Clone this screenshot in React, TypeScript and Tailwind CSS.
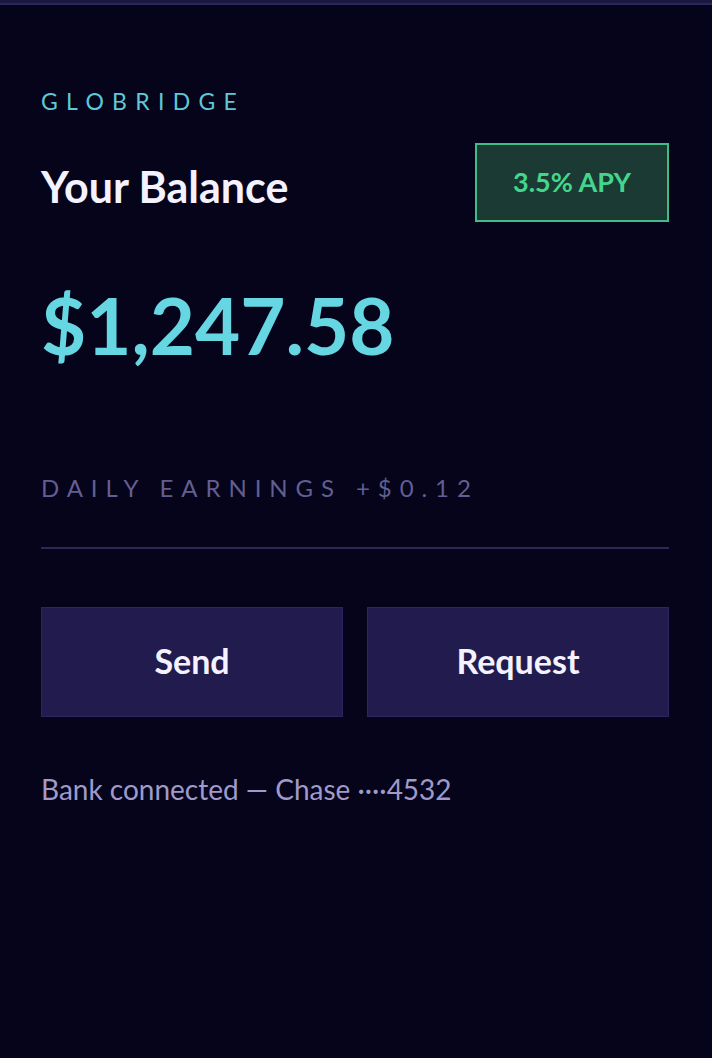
export default function App() {
  return (
    <div className="min-h-screen bg-[#05041a] font-['Lato','Noto_Sans',sans-serif]">
      {/* top edge */}
      <div className="h-[3px] bg-[#1c1940]" />
      <div className="h-[2px] bg-[#2b2660]" />

      <main className="pl-[41px] pr-[43px] pt-[80px]">
        <div className="text-[23px] leading-[32px] tracking-[0.36em] text-[#5ec8d6]">
          GLOBRIDGE
        </div>

        <div className="mt-[26px] flex items-center justify-between">
          <h1 className="mt-[8px] text-[43px] leading-[50px] font-bold text-[#f4f2ff]">
            Your Balance
          </h1>
          <div className="flex h-[79px] w-[194px] items-center justify-center border-2 border-[#3fbd84] bg-[#1a3a33] text-[27px] font-bold text-[#44d68c]">
            3.5% APY
          </div>
        </div>

        <div className="mt-[55px] text-[78px] leading-[96px] font-bold text-[#66d6e2]">
          $1,247.58
        </div>

        <div className="mt-[100px] text-[24px] leading-[30px] tracking-[0.33em] text-[#625e92]">
          DAILY EARNINGS +$0.12
        </div>

        <div className="mt-[44px] h-[2px] bg-[#2c2858]" />

        <div className="mt-[58px] grid grid-cols-2 gap-[24px]">
          <button className="h-[110px] border border-[#2c2660] bg-[#221c4e] pb-[4px] text-[34px] font-bold text-[#f4f2ff]">
            Send
          </button>
          <button className="h-[110px] border border-[#2c2660] bg-[#221c4e] pb-[4px] text-[34px] font-bold text-[#f4f2ff]">
            Request
          </button>
        </div>

        <p className="mt-[55px] text-[28px] leading-[34px] text-[#a09acb]">
          Bank connected — Chase ····4532
        </p>
      </main>
    </div>
  );
}
